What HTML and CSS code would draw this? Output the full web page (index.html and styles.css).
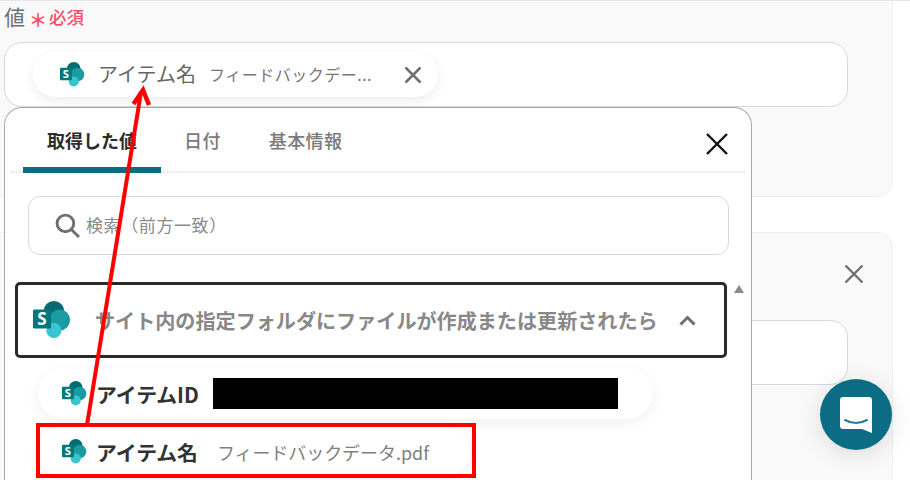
FILE: index.html
```html
<!DOCTYPE html>
<html lang="ja">
<head>
<meta charset="utf-8">
<title>値</title>
<link rel="stylesheet" href="styles.css">
</head>
<body>
<main class="page">
  <section class="card card-first">
    <div class="label"><span class="label-main">値</span><span class="label-star">＊</span><span class="label-req">必須</span></div>
    <div class="field">
      <div class="chip">
        <svg class="sp-small" viewBox="0 0 40 40">
          <circle cx="22" cy="11" r="11" fill="#036c70"/>
          <circle cx="28" cy="20" r="11" fill="#1a9ba1"/>
          <circle cx="22" cy="31" r="8" fill="#37c6d0"/>
          <rect x="0" y="9" width="19" height="20" rx="1.500" fill="#03787c"/>
          <text x="9.500" y="25" class="sp-s">S</text>
        </svg>
        <span class="chip-name">アイテム名</span>
        <span class="chip-value">フィードバックデー...</span>
        <svg class="chip-x" viewBox="0 0 18 18"><path d="M1.500 1.500L16.500 16.500M16.500 1.500L1.500 16.500"/></svg>
      </div>
    </div>
  </section>
  <section class="card card-second">
    <svg class="card-x" viewBox="0 0 20 20"><path d="M1.500 1.500L18.500 18.500M18.500 1.500L1.500 18.500"/></svg>
    <div class="field field-second"></div>
  </section>
</main>

<div class="popup">
  <div class="tabs">
    <div class="tab tab-active">取得した値</div>
    <div class="tab tab-date">日付</div>
    <div class="tab tab-info">基本情報</div>
    <svg class="popup-x" viewBox="0 0 22 22"><path d="M1 1L21 21M21 1L1 21"/></svg>
  </div>
  <div class="search">
    <svg class="search-icon" viewBox="0 0 24 24"><circle cx="10" cy="10" r="8"/><path d="M16 16L23 23"/></svg>
    <span class="search-text">検索（前方一致）</span>
  </div>
  <div class="list">
    <div class="trigger">
      <svg class="sp-large" viewBox="0 0 40 40">
        <circle cx="22" cy="11" r="11" fill="#036c70"/>
        <circle cx="28" cy="20" r="11" fill="#1a9ba1"/>
        <circle cx="22" cy="31" r="8" fill="#37c6d0"/>
        <rect x="0" y="9" width="19" height="20" rx="1.500" fill="#03787c"/>
        <text x="9.500" y="25" class="sp-s">S</text>
      </svg>
      <span class="trigger-text">サイト内の指定フォルダにファイルが作成または更新されたら</span>
      <svg class="chevron" viewBox="0 0 17 11"><path d="M1.500 9.500L8.500 2.500L15.500 9.500"/></svg>
    </div>
    <div class="item item-id">
      <svg class="sp-small" viewBox="0 0 40 40">
        <circle cx="22" cy="11" r="11" fill="#036c70"/>
        <circle cx="28" cy="20" r="11" fill="#1a9ba1"/>
        <circle cx="22" cy="31" r="8" fill="#37c6d0"/>
        <rect x="0" y="9" width="19" height="20" rx="1.500" fill="#03787c"/>
        <text x="9.500" y="25" class="sp-s">S</text>
      </svg>
      <span class="item-name">アイテムID</span>
      <span class="redact"></span>
    </div>
    <div class="item item-file">
      <svg class="sp-small" viewBox="0 0 40 40">
        <circle cx="22" cy="11" r="11" fill="#036c70"/>
        <circle cx="28" cy="20" r="11" fill="#1a9ba1"/>
        <circle cx="22" cy="31" r="8" fill="#37c6d0"/>
        <rect x="0" y="9" width="19" height="20" rx="1.500" fill="#03787c"/>
        <text x="9.500" y="25" class="sp-s">S</text>
      </svg>
      <span class="item-name">アイテム名</span>
      <span class="item-value">フィードバックデータ.pdf</span>
    </div>
    <svg class="scroll-up" viewBox="0 0 10 8"><path d="M5 0L10 8H0Z"/></svg>
  </div>
</div>

<div class="highlight"></div>
<svg class="arrow" width="910" height="480" viewBox="0 0 910 480">
  <path class="arrow-line" d="M87 425L141 92"/>
  <path class="arrow-head" d="M133.500 104L143 90L149 105"/>
</svg>

<button class="chat" type="button" aria-label="チャット">
  <svg viewBox="0 0 32 36" width="32" height="36">
    <path class="bubble" d="M3 0H29A3 3 0 0 1 32 3V36L22 32H3A3 3 0 0 1 0 29V3A3 3 0 0 1 3 0Z"/>
    <path class="smile" d="M5 23Q16 29 27 23"/>
  </svg>
</button>
</body>
</html>
```
FILE: styles.css
```css
* { box-sizing: border-box; }
html, body { margin: 0; height: 100%; overflow: hidden; background: #fff; }
body { font-family: "Noto Sans CJK JP", "Noto Sans", sans-serif; color: #6b6b6b; }
.sp-s { font: 700 18px "Open Sans", sans-serif; fill: #fff; text-anchor: middle; }

.page { width: 910px; height: 480px; overflow: hidden; border-top: 1px solid #e5e7eb; }
.card { width: 913px; margin-left: -20px; padding-left: 23px; background: #f9f9fa; border: 1px solid #eeeff1; border-top: 0; }
.card-first { height: 196px; border-radius: 0 0 16px 16px; }
.card-second { position: relative; height: 248px; margin-top: 35px; padding-top: 87px; border-top: 1px solid #eeeff1; border-bottom: 0; border-radius: 16px 16px 0 0; }

.label { display: flex; align-items: center; height: 30px; }
.label-main { font-size: 21px; color: #707070; }
.label-star { margin-left: 4px; width: 18px; font-size: 18px; font-weight: 700; line-height: 30px; height: 30px; padding-top: 3px; color: #fb4d68; }
.label-req { margin-left: 2px; font-size: 17.500px; font-weight: 500; color: #fb4d68; }

.field { width: 844px; height: 65px; margin-top: 11px; padding: 9px 0 0 28px; background: #fff; border: 1px solid #d5d8df; border-radius: 18px; }
.field-second { margin-top: 0; }
.chip { display: flex; align-items: center; width: 405px; height: 45px; padding-left: 27px; background: #fff; border-radius: 23px; box-shadow: 0 4px 12px rgba(0, 0, 0, .07); }
.sp-small { flex: none; width: 25px; height: 25px; }
.chip-name { margin: 0 0 2px 13px; font-size: 20px; color: #666; }
.chip-value { margin: 0 0 2px 13px; font-size: 16px; letter-spacing: .5px; color: #777; width: 174px; white-space: nowrap; }
.chip-x { width: 18px; height: 18px; margin-left: 21px; fill: none; stroke: #6f6f6f; stroke-width: 2.500; }
.card-x { position: absolute; left: 863px; top: 31px; width: 20px; height: 20px; fill: none; stroke: #707070; stroke-width: 2.400; }

.popup { position: absolute; left: 4px; top: 107px; width: 748px; height: 373px; background: #fff; border: 1.500px solid #a8a8a8; border-bottom: 0; border-radius: 18px 18px 0 0; }
.tabs { position: relative; display: flex; height: 65px; margin: 0 5px 0 5px; border-bottom: 2px solid #f0f0f0; }
.tab { font-size: 18px; font-weight: 500; color: #7a7a7a; line-height: 64px; letter-spacing: .4px; }
.tab-active { width: 138px; margin-left: 13px; padding-left: 24px; color: #2c2c2c; font-weight: 700; letter-spacing: 0; height: 65px; border-bottom: 6px solid #0b6c84; border-radius: 6px 6px 0 0; }
.tab-date { margin-left: 23px; }
.tab-info { margin-left: 48px; }
.popup-x { position: absolute; right: 18px; top: 25px; width: 22px; height: 22px; fill: none; stroke: #111; stroke-width: 2.400; }

.search { display: flex; align-items: center; width: 701px; height: 59px; margin: 23px 0 0 23px; padding-left: 26px; border: 1.500px solid #d8d8d8; border-radius: 12px; font-size: 17px; letter-spacing: .6px; color: #8a8a8a; }
.search-icon { width: 25px; height: 25px; margin-right: 6px; fill: none; stroke: #6f6f6f; stroke-width: 2.800; }
.search-text { margin-bottom: 2px; }

.list { position: relative; margin-top: 27px; }
.trigger { display: flex; align-items: center; width: 712px; height: 76px; margin-left: 10px; padding-left: 15px; border: 3px solid #2a2a2a; border-radius: 5px; }
.sp-large { flex: none; width: 38px; height: 38px; }
.trigger-text { margin-left: 24px; font-size: 20.100px; font-weight: 700; color: #888; white-space: nowrap; }
.chevron { width: 17px; height: 11px; margin-left: 21px; fill: none; stroke: #6f6f6f; stroke-width: 3px; }
.scroll-up { position: absolute; left: 729px; top: 3px; width: 10px; height: 8px; fill: #8a8a8a; }

.item { display: flex; align-items: center; height: 51px; margin-left: 33px; padding-left: 24px; background: #fff; border-radius: 26px; box-shadow: 0 4px 14px rgba(0, 0, 0, .06); }
.item-id { width: 615px; margin-top: 10px; }
.item-file { width: 432px; margin-top: 7px; }
.item-name { margin-left: 9px; font-size: 20.800px; font-weight: 700; color: #333; }
.item-value { margin-left: 19px; font-size: 17.950px; color: #808080; }
.redact { width: 405px; height: 31px; margin-left: 14px; background: #000; }

.highlight { position: absolute; left: 36px; top: 423px; width: 440px; height: 55px; border: 4px solid #f00; }
.arrow { position: absolute; left: 0; top: 0; pointer-events: none; }
.arrow-line, .arrow-head { fill: none; stroke: #f00; stroke-width: 4px; }
.arrow-head { stroke-width: 4.500px; }

.chat { position: absolute; left: 820px; top: 379px; width: 72px; height: 71px; padding: 0; display: flex; align-items: center; justify-content: center; background: #0b6c84; border: 0; border-radius: 50%; box-shadow: 0 4px 24px rgba(0, 0, 0, .12); }
.bubble { fill: #fff; }
.smile { fill: none; stroke: #1f7f97; stroke-width: 2px; stroke-linecap: round; }
```
